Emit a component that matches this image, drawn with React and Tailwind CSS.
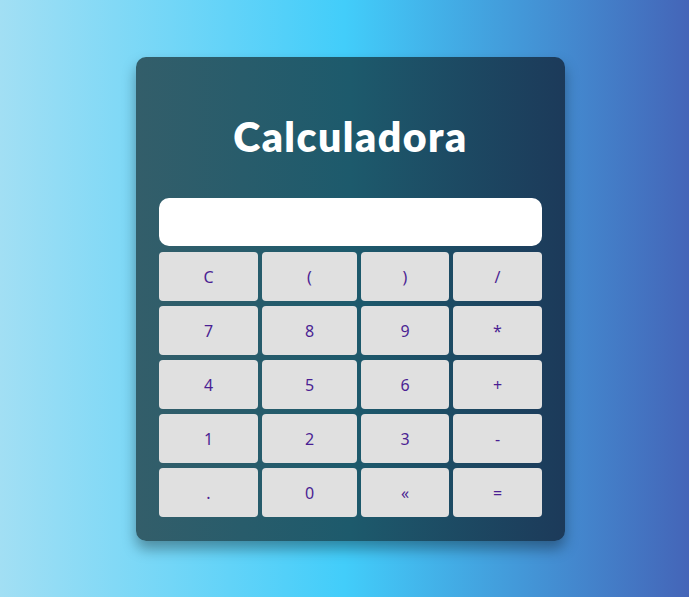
const keys = ['C', '(', ')', '/', '7', '8', '9', '*', '4', '5', '6', '+', '1', '2', '3', '-', '.', '0', '«', '='];

export default function App() {
  return (
    <div className="w-full min-h-screen flex justify-center bg-[linear-gradient(to_right,#a2dff4_0%,#42cdfa_50%,#4465b8_100%)] font-['Lato',sans-serif]">
      <div className="mt-[57px] ml-[12px] w-[429px] h-[484px] rounded-[10px] px-[23px] bg-[linear-gradient(to_right,#335e6a_0%,#1d5a6c_50%,#1c3a5a_100%)] shadow-[0_8px_14px_rgba(0,0,0,0.35)] flex flex-col">
        <h1 className="mt-[58px] text-center text-white text-[41px] leading-[44px] font-extrabold tracking-[1.5px]">
          Calculadora
        </h1>
        <div className="mt-[39px] h-[48px] bg-white rounded-[10px]"></div>
        <div className="mt-[6px] grid grid-cols-[99px_95px_88px_89px] auto-rows-[49px] gap-x-[4px] gap-y-[5px]">
          {keys.map((k) => (
            <button
              key={k}
              className="bg-[#e0e0e0] rounded-[4px] text-[#4b1f93] text-[16px] font-normal font-['Noto_Sans',sans-serif] flex items-center justify-center"
            >
              {k}
            </button>
          ))}
        </div>
      </div>
    </div>
  );
}
